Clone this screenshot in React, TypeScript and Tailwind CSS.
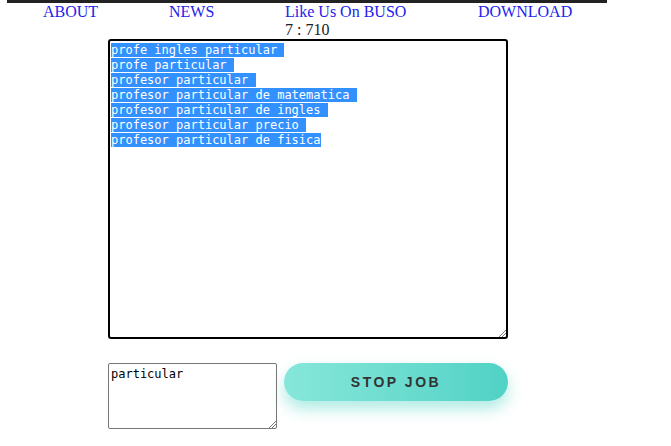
import React from "react";

const lines = [
  "profe ingles particular ",
  "profe particular ",
  "profesor particular ",
  "profesor particular de matematica ",
  "profesor particular de ingles ",
  "profesor particular precio ",
  "profesor particular de fisica",
];

export default function App() {
  return (
    <div className="w-[671px] h-[446px] bg-white overflow-hidden">
      <div className="ml-[7px] w-[600px] border-t-[3px] border-[#222]">
        <div className="flex pl-[36px] text-[16px] leading-[18px] text-[#2222ee]" style={{ fontFamily: '"Liberation Serif", serif' }}>
          <span className="w-[126px]">ABOUT</span>
          <span className="w-[116px]">NEWS</span>
          <span className="w-[193px]">Like Us On BUSO</span>
          <span>DOWNLOAD</span>
        </div>
        <div className="pl-[278px] text-[16px] leading-[18px] text-[#222]" style={{ fontFamily: '"Liberation Serif", serif' }}>
          7 : 710
        </div>
      </div>
      <div className="ml-[108px] mt-[0px] w-[400px] h-[300px] border-2 border-black rounded-[3px] relative px-[1px] pt-[2px]" style={{ fontFamily: '"DejaVu Sans Mono", monospace' }}>
        <div className="text-[12px] leading-[15px] text-white">
          {lines.map((l, i) => (
            <div key={i}>
              <span className="bg-[#3390ff] whitespace-pre">{l}</span>
            </div>
          ))}
        </div>
        <svg className="absolute right-[0px] bottom-[0px]" width="8" height="8" viewBox="0 0 8 8">
          <line x1="1" y1="8" x2="8" y2="1" stroke="#777" strokeWidth="1" />
          <line x1="4" y1="8" x2="8" y2="4" stroke="#777" strokeWidth="1" />
        </svg>
      </div>
      <div className="ml-[108px] mt-[24px] flex items-start gap-[7px]">
        <div className="relative w-[169px] h-[66px] border border-[#767676] rounded-[2px] px-[2px] pt-[3px] text-[12px] leading-[15px] text-black" style={{ fontFamily: '"DejaVu Sans Mono", monospace' }}>
          particular
          <svg className="absolute right-[0px] bottom-[0px]" width="8" height="8" viewBox="0 0 8 8">
            <line x1="1" y1="8" x2="8" y2="1" stroke="#777" strokeWidth="1" />
            <line x1="4" y1="8" x2="8" y2="4" stroke="#777" strokeWidth="1" />
          </svg>
        </div>
        <button className="w-[224px] h-[38px] rounded-full bg-gradient-to-r from-[#86e7da] to-[#4fd2c5] shadow-[0_8px_15px_rgba(78,210,196,0.45)] text-[14px] font-bold tracking-[2.5px] text-[#333]" style={{ fontFamily: '"Liberation Sans", Arial, sans-serif' }}>
          STOP JOB
        </button>
      </div>
    </div>
  );
}
